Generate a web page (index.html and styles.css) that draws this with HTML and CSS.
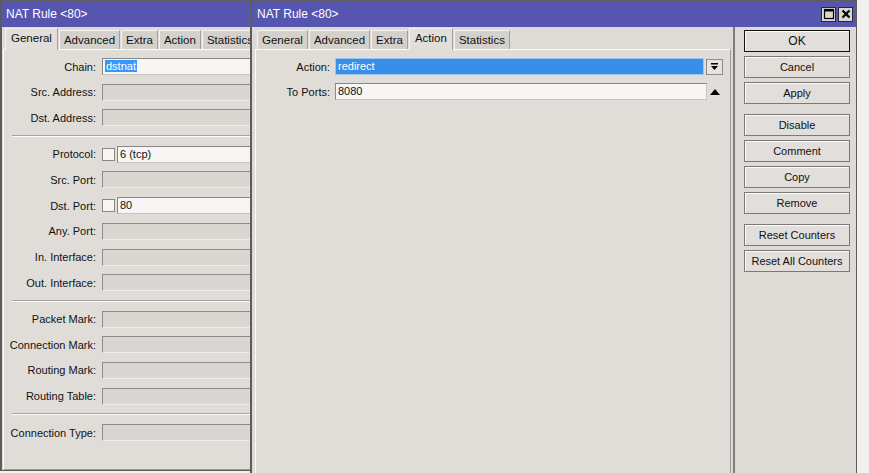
FILE: index.html
```html
<!DOCTYPE html>
<html lang="en">
<head>
    <meta charset="UTF-8">
    <meta name="viewport" content="width=device-width, initial-scale=1.0">
    <title>NAT Rule &lt;80&gt;</title>
    <link rel="stylesheet" href="styles.css">
</head>
<body>
<div class="desktop">

    <!-- Janela de trás: aba General -->
    <div class="win win-back">
        <div class="titlebar"><span class="title">NAT Rule &lt;80&gt;</span></div>
        <div class="win-body">
            <div class="main">
                <div class="tabs">
                    <span class="tab active">General</span>
                    <span class="tab">Advanced</span>
                    <span class="tab">Extra</span>
                    <span class="tab">Action</span>
                    <span class="tab">Statistics</span>
                </div>
                <div class="panel">
                    <div class="form form-general">
                        <div class="row"><span class="lbl">Chain:</span><div class="field edit"><span class="sel">dstnat</span></div></div>
                        <div class="row"><span class="lbl">Src. Address:</span><div class="field"></div></div>
                        <div class="row"><span class="lbl">Dst. Address:</span><div class="field"></div></div>
                        <div class="sep"></div>
                        <div class="row"><span class="lbl">Protocol:</span><span class="check"></span><div class="field edit">6 (tcp)</div></div>
                        <div class="row"><span class="lbl">Src. Port:</span><div class="field"></div></div>
                        <div class="row"><span class="lbl">Dst. Port:</span><span class="check"></span><div class="field edit">80</div></div>
                        <div class="row"><span class="lbl">Any. Port:</span><div class="field"></div></div>
                        <div class="row"><span class="lbl">In. Interface:</span><div class="field"></div></div>
                        <div class="row"><span class="lbl">Out. Interface:</span><div class="field"></div></div>
                        <div class="sep"></div>
                        <div class="row"><span class="lbl">Packet Mark:</span><div class="field"></div></div>
                        <div class="row"><span class="lbl">Connection Mark:</span><div class="field"></div></div>
                        <div class="row"><span class="lbl">Routing Mark:</span><div class="field"></div></div>
                        <div class="row"><span class="lbl">Routing Table:</span><div class="field"></div></div>
                        <div class="sep"></div>
                        <div class="row"><span class="lbl">Connection Type:</span><div class="field"></div></div>
                    </div>
                </div>
            </div>
        </div>
    </div>

    <!-- Janela da frente: aba Action -->
    <div class="win win-front">
        <div class="titlebar">
            <span class="title">NAT Rule &lt;80&gt;</span>
            <div class="title-btns">
                <span class="tbtn">
                    <svg width="12" height="12" viewBox="0 0 12 12"><rect x="1.5" y="1.5" width="9" height="9" fill="none" stroke="#000" stroke-width="1.2"/><rect x="1" y="1" width="10" height="2.5" fill="#000"/></svg>
                </span>
                <span class="tbtn">
                    <svg width="12" height="12" viewBox="0 0 12 12"><path d="M2.5 2.5 L9.5 9.5 M9.5 2.5 L2.5 9.5" stroke="#000" stroke-width="2.2"/></svg>
                </span>
            </div>
        </div>
        <div class="win-body">
            <div class="main">
                <div class="tabs">
                    <span class="tab">General</span>
                    <span class="tab">Advanced</span>
                    <span class="tab">Extra</span>
                    <span class="tab active">Action</span>
                    <span class="tab">Statistics</span>
                </div>
                <div class="panel">
                    <div class="form form-action">
                        <div class="row">
                            <span class="lbl">Action:</span>
                            <div class="field picked">redirect</div>
                            <span class="drop">
                                <svg width="9" height="9" viewBox="0 0 9 9"><rect x="1" y="1" width="7" height="1.5" fill="#000"/><path d="M1 4 H8 L4.5 8 Z" fill="#000"/></svg>
                            </span>
                        </div>
                        <div class="row">
                            <span class="lbl">To Ports:</span>
                            <div class="field edit">8080</div>
                            <span class="up">
                                <svg width="10" height="6" viewBox="0 0 10 6"><path d="M0 6 L5 0 L10 6 Z" fill="#000"/></svg>
                            </span>
                        </div>
                    </div>
                </div>
            </div>
            <div class="side">
                <div class="btn-group">
                    <span class="btn default">OK</span>
                    <span class="btn">Cancel</span>
                    <span class="btn">Apply</span>
                </div>
                <div class="btn-group">
                    <span class="btn">Disable</span>
                    <span class="btn">Comment</span>
                    <span class="btn">Copy</span>
                    <span class="btn">Remove</span>
                </div>
                <div class="btn-group">
                    <span class="btn">Reset Counters</span>
                    <span class="btn">Reset All Counters</span>
                </div>
            </div>
        </div>
    </div>

</div>
</body>
</html>
```

FILE: styles.css
```css
* {
    box-sizing: border-box;
}

html, body {
    margin: 0;
    height: 100%;
}

body {
    background-color: #f2f1ef;
    font-family: "Liberation Sans", Arial, sans-serif;
    font-size: 11px;
    color: #111;
    overflow: hidden;
}

.desktop {
    position: relative;
    width: 869px;
    height: 473px;
}

/* Janelas soltas na área de trabalho */
.win {
    position: absolute;
    top: 0;
    display: flex;
    flex-direction: column;
    background-color: #dedbd7;
    border: 1px solid #5f5d5b;
    border-left-width: 2px;
}

.win-back {
    left: 0;
    width: 262px;
    height: 471px;
}

.win-front {
    left: 250px;
    width: 607px;
    height: 480px;
    border-bottom: none;
}

.titlebar {
    height: 26px;
    flex-shrink: 0;
    display: flex;
    align-items: center;
    justify-content: space-between;
    padding: 0 3px 0 4px;
    background-color: #5656b0;
    color: #fff;
    font-size: 12px;
}

.win-front .titlebar {
    padding-left: 5px;
}

.title-btns {
    display: flex;
    gap: 2px;
}

.tbtn {
    width: 15px;
    height: 15px;
    display: flex;
    align-items: center;
    justify-content: center;
    background-color: #d9d6d2;
    border: 1px solid #2a2a2a;
}

.win-body {
    flex: 1;
    display: flex;
    min-height: 0;
}

.main {
    flex: 1;
    display: flex;
    flex-direction: column;
    padding-left: 1px;
}

.win-front .main {
    padding: 0 2px 0 3px;
}

/* Abas */
.tabs {
    height: 22px;
    flex-shrink: 0;
    display: flex;
    align-items: flex-end;
    padding-left: 2px;
}

.tab {
    height: 19px;
    line-height: 18px;
    padding: 0 4px;
    margin-right: 1px;
    background-color: #d4d1cd;
    border: 1px solid #a29f9c;
    border-top-color: #f4f3f1;
    border-left-color: #f4f3f1;
    border-bottom: none;
    white-space: nowrap;
    font-size: 11.5px;
}

.tab.active {
    height: 22px;
    line-height: 18px;
    padding: 0 5px;
    background-color: #e2dfdb;
    position: relative;
    top: 1px;
    z-index: 1;
}

.panel {
    flex: 1;
    background-color: #e0ddd9;
    border: 1px solid;
    border-color: #fbfbfa #9c9996 #9c9996 #fbfbfa;
}

/* Formulário */
.form {
    display: flex;
    flex-direction: column;
    padding-top: 8px;
}

.form-general {
    gap: 8.7px;
}

.form-action {
    gap: 8px;
    padding-right: 7px;
}

.row {
    height: 17px;
    display: flex;
    align-items: center;
}

.lbl {
    width: 92px;
    margin-right: 6px;
    flex-shrink: 0;
    text-align: right;
    white-space: nowrap;
}

.form-action .lbl {
    width: 74px;
    margin-right: 5px;
}

.field {
    flex: 1;
    height: 17px;
    padding: 0 2px;
    line-height: 15px;
    white-space: nowrap;
    overflow: hidden;
    background-color: #dad7d3;
    border: 1px solid;
    border-color: #8e8b88 #eeece9 #eeece9 #8e8b88;
}

.field.edit {
    background-color: #f7f6f4;
    border-color: #8a8785 #c6c3c0 #c6c3c0 #8a8785;
}

.field.picked {
    background-color: #3a8ee8;
    border-color: #9ec6ee;
    color: #fff;
}

.sel {
    background-color: #3399ff;
    color: #fff;
    padding: 0 1px;
}

.check {
    width: 13px;
    height: 13px;
    margin-right: 2px;
    flex-shrink: 0;
    background-color: #f7f6f4;
    border: 1px solid #8a8785;
}

.sep {
    height: 2px;
    margin-left: 8px;
    border-top: 1px solid #a6a3a0;
    border-bottom: 1px solid #fafaf9;
}

.drop {
    width: 17px;
    height: 16px;
    margin-left: 2px;
    flex-shrink: 0;
    display: flex;
    align-items: center;
    justify-content: center;
    background-color: #e6e4e1;
    border: 1px solid #8f8c89;
}

.up {
    width: 16px;
    flex-shrink: 0;
    display: flex;
    justify-content: center;
}

/* Coluna de botões */
.side {
    width: 123px;
    flex-shrink: 0;
    display: flex;
    flex-direction: column;
    gap: 10px;
    padding: 3px 0 0 9px;
    border-left: 2px solid #7f7d7b;
}

.btn-group {
    display: flex;
    flex-direction: column;
    gap: 4px;
}

.btn {
    width: 106px;
    height: 22px;
    line-height: 20px;
    text-align: center;
    background-color: #e1dedb;
    border: 1px solid #7b7977;
    box-shadow: inset 1px 1px 0 #fbfbfa;
}

.btn.default {
    border-color: #111;
    font-size: 12px;
}
```
